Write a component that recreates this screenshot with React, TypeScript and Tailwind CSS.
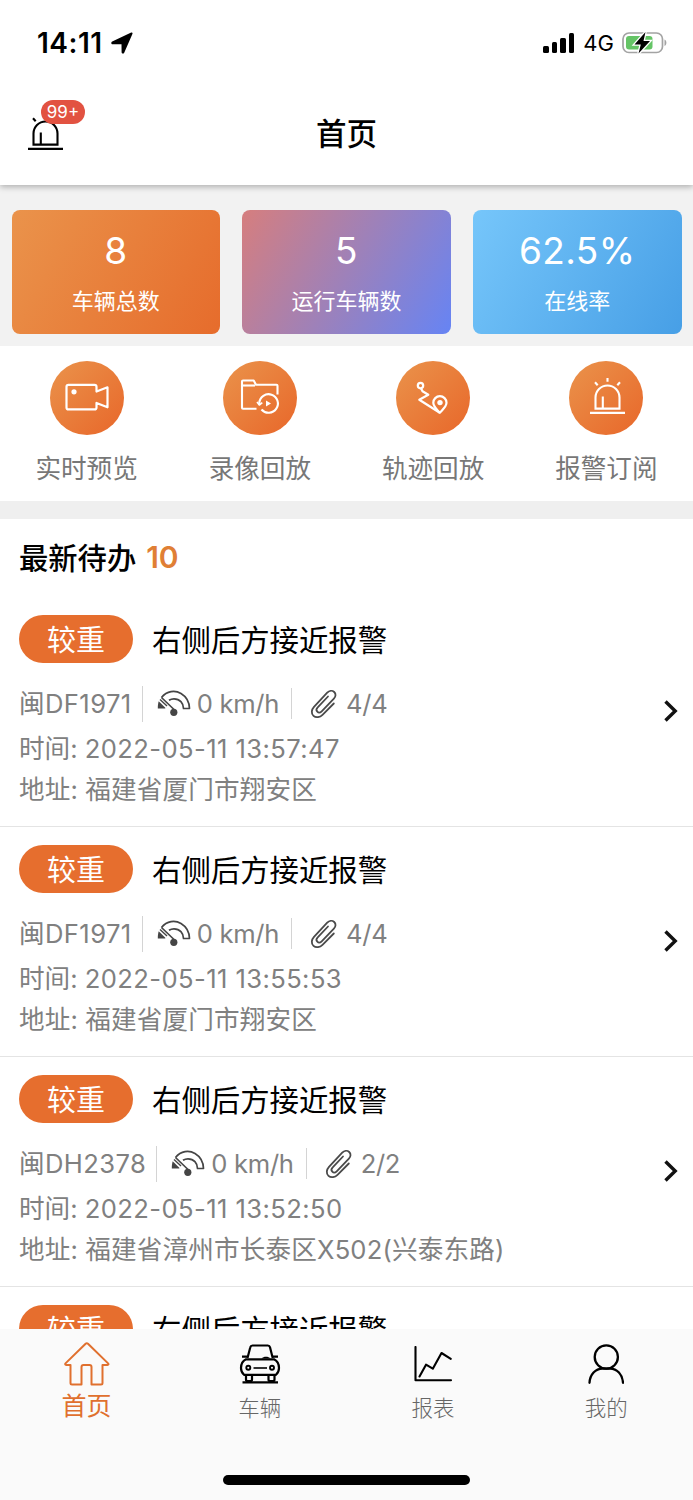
import { useState } from 'react';
import type { ReactNode } from 'react';

type TabType = 'home' | 'vehicles' | 'reports' | 'mine';

interface Alarm {
    id: number;
    level: string;
    title: string;
    plate: string;
    speed: string;
    files: string;
    time: string;
    address: string;
}

const alarms: Alarm[] = [
    { id: 1, level: '较重', title: '右侧后方接近报警', plate: '闽DF1971', speed: '0 km/h', files: '4/4', time: '2022-05-11 13:57:47', address: '福建省厦门市翔安区' },
    { id: 2, level: '较重', title: '右侧后方接近报警', plate: '闽DF1971', speed: '0 km/h', files: '4/4', time: '2022-05-11 13:55:53', address: '福建省厦门市翔安区' },
    { id: 3, level: '较重', title: '右侧后方接近报警', plate: '闽DH2378', speed: '0 km/h', files: '2/2', time: '2022-05-11 13:52:50', address: '福建省漳州市长泰区X502(兴泰东路)' },
    { id: 4, level: '较重', title: '右侧后方接近报警', plate: '闽DH2378', speed: '0 km/h', files: '2/2', time: '2022-05-11 13:50:12', address: '福建省漳州市长泰区X502(兴泰东路)' },
];

const stats = [
    { value: '8', label: '车辆总数', bg: 'bg-linear-[120deg,#ea934b,#e66c2c]' },
    { value: '5', label: '运行车辆数', bg: 'bg-linear-[120deg,#d67e7e,#6684f4]' },
    { value: '62.5%', label: '在线率', bg: 'bg-linear-[120deg,#76c6fa,#479fe6]' },
];

function SirenIcon({ className }: { className?: string }) {
    return (
        <svg className={className} viewBox="0 0 35 37" fill="none" stroke="currentColor" strokeWidth="2.1">
            <path d="M5.500 30.600V19.500a12 12 0 0 1 24 0v11.100z" />
            <path d="M12.800 18.500v12" />
            <path d="M0 34.800h35" strokeWidth="2.300" />
            <path d="M5 4.200l2.700 3M17.500 0v3.800M30 4.200l-2.700 3" />
        </svg>
    );
}

function CameraIcon() {
    return (
        <svg className="w-[74px] h-[74px]" viewBox="0 0 74 74" fill="none" stroke="white" strokeWidth="2.200" strokeLinejoin="round">
            <path d="M18.500 23.800h26a2 2 0 0 1 2 2v4.800l11-4.300v20l-11-4.300v4.400a2 2 0 0 1-2 2h-26a2 2 0 0 1-2-2V25.800a2 2 0 0 1 2-2z" />
            <circle cx="24" cy="30.800" r="2.600" fill="white" stroke="none" />
        </svg>
    );
}

function FolderIcon() {
    return (
        <svg className="w-[74px] h-[74px]" viewBox="0 0 74 74" fill="none" stroke="white" strokeWidth="2.100" strokeLinejoin="round">
            <path d="M33.500 47.700H20a1 1 0 0 1-1-1V20.500a1 1 0 0 1 1-1h10.700l2.300 4.300h20.500a1 1 0 0 1 1 1V33.500" />
            <path d="M19 24.500h13" />
            <path d="M36.300 44v-2a9.300 9.300 0 1 1 2.200 6.500" />
            <path d="M34 41l2.300 3 3-2.300" strokeWidth="1.600" />
            <path d="M43 39.500v6l5-3z" fill="white" stroke="none" />
        </svg>
    );
}

function TrackIcon() {
    return (
        <svg className="w-[74px] h-[74px]" viewBox="0 0 74 74" fill="none" stroke="white" strokeWidth="2.200" strokeLinejoin="round">
            <circle cx="24.500" cy="24.600" r="2.700" />
            <path d="M25 27.300l1.500 3 5.800 3.500-9 5 20.500 13" />
            <path d="M43.800 51.800c-3-3.500-6.500-6.300-6.500-10a6.600 6.600 0 0 1 13.200 0c0 3.700-3.500 6.500-6.700 10z" />
            <circle cx="44" cy="41.600" r="2.700" fill="white" stroke="none" />
        </svg>
    );
}

function SpeedIcon() {
    return (
        <svg className="w-[34px] h-[28px] text-[#454545]" viewBox="0 0 34 28" fill="none" stroke="currentColor" strokeWidth="1.700" strokeLinejoin="round">
            <path d="M4.500 7.500C10 .8 18 0 24 3.500c5 3 8.300 8 8.500 15h-6c0-5.500-3.700-9.700-9.500-9.700-1.800 0-3.500.5-5 1.500" />
            <path d="M4.500 7.500l12.500 12" />
            <path d="M3 9.500l7 6.500" strokeWidth="1.400" />
            <path d="M1.700 11.200l6.600 6.500v.8H.800c0-2.700.2-5 .9-7.300z" fill="currentColor" stroke="none" />
            <circle cx="16.800" cy="22.300" r="3.600" fill="currentColor" stroke="none" />
        </svg>
    );
}

function ClipIcon() {
    return (
        <svg className="w-[28px] h-[30px] text-[#4a4a4a]" viewBox="0 0 28 30" fill="none" stroke="currentColor" strokeWidth="1.800" strokeLinecap="round">
            <path d="M24.800 14.500L13.500 25.800c-2.500 2.500-6.500 3.300-9 1-2.600-2.400-2-6.300.5-9L18.200 3.700c2-2 5-2.500 7-.7s1.600 4.700-.3 6.700L12.700 22.300c-1.300 1.300-3.200 1.600-4.400.4s-.9-3 .4-4.300L19 7.500" />
        </svg>
    );
}

function HomeIcon() {
    return (
        <svg className="w-[46px] h-[44px]" viewBox="0 0 46 44" fill="none" stroke="currentColor" strokeWidth="2" strokeLinejoin="round">
            <path d="M21.600 1.700L1.500 21.400c-.6.700-.3 1.500.6 1.500H6.500V41c0 1 .6 1.500 1.500 1.500h9.500V25c0-1.300.8-2 2-2h6c1.200 0 2 .7 2 2v17.500H37c1 0 1.500-.6 1.500-1.500V22.900h5c1 0 1.300-.8.600-1.500L24 1.700c-.8-.7-1.600-.7-2.400 0z" />
        </svg>
    );
}

function CarIcon() {
    return (
        <svg className="w-[42px] h-[40px]" viewBox="0 0 42 40" fill="none" stroke="currentColor" strokeWidth="2.200" strokeLinejoin="round">
            <path d="M8.500 14L11.300 3.300c.3-1.300 1-1.800 2.200-1.800h15.300c1.200 0 1.900.5 2.200 1.800L33.700 14" />
            <path d="M3 12.600h5M34 12.600h5" strokeWidth="2.400" />
            <path d="M22.500 14.500c2-2.500 7-2.500 9 0z" fill="currentColor" stroke="none" />
            <path d="M7 15.300h28c3 1.500 5 5 5 8.700 0 3-1 5-3 6.800H5C3 29 2 27 2 24c0-4 2-7.200 5-8.700z" />
            <circle cx="9.300" cy="23.700" r="2" strokeWidth="1.900" />
            <circle cx="33" cy="23.700" r="2" strokeWidth="1.900" />
            <path d="M14.500 24h13.500" strokeWidth="1.600" />
            <path d="M7 31v4.500c0 1 .7 1.500 1.500 1.500h3c1 0 1.500-.6 1.500-1.500V31M29.500 31v4.500c0 1 .6 1.500 1.500 1.500h3c.9 0 1.500-.6 1.500-1.500V31" />
            <path d="M3.500 38.300h35.500" />
        </svg>
    );
}

function ChartIcon() {
    return (
        <svg className="w-[38px] h-[36px]" viewBox="0 0 38 36" fill="none" stroke="currentColor" strokeWidth="2.100" strokeLinecap="round" strokeLinejoin="round">
            <path d="M1.500 1v33.200H37" />
            <path d="M5.500 30.500l6.500-11.800 6.800 4L27.500 7l9.300 5.800" />
        </svg>
    );
}

function UserIcon() {
    return (
        <svg className="w-[36px] h-[40px]" viewBox="0 0 36 40" fill="none" stroke="currentColor" strokeWidth="2.300" strokeLinecap="round">
            <circle cx="18.300" cy="13" r="11.600" />
            <path d="M1.500 38.800c.5-8.500 6-14.100 13-14.100h7.500c7 0 12.500 5.600 13 14.100" />
        </svg>
    );
}

const shortcuts: { label: string; icon: ReactNode }[] = [
    { label: '实时预览', icon: <CameraIcon /> },
    { label: '录像回放', icon: <FolderIcon /> },
    { label: '轨迹回放', icon: <TrackIcon /> },
    { label: '报警订阅', icon: <SirenIcon className="w-[35px] h-[37px] mb-[2px] ml-[2px]" /> },
];

const tabs: { id: TabType; label: string; icon: ReactNode }[] = [
    { id: 'home', label: '首页', icon: <HomeIcon /> },
    { id: 'vehicles', label: '车辆', icon: <CarIcon /> },
    { id: 'reports', label: '报表', icon: <ChartIcon /> },
    { id: 'mine', label: '我的', icon: <UserIcon /> },
];

function StatusBar() {
    return (
        <div className="h-[86px] flex items-center justify-between pl-[37px] pr-[25px]">
            <div className="flex items-center gap-[8px]">
                <span className="text-[28px] leading-none font-semibold tracking-[0.5px]">14:11</span>
                <svg className="w-[22px] h-[22px]" viewBox="0 0 22 22" fill="currentColor">
                    <path d="M20.200.6c1-.4 1.700.3 1.200 1.300L13.200 20.700c-.6 1.300-2.600 1-2.600-.4l-.1-8-8.900-.1c-1.500 0-1.800-2-.4-2.600z" />
                </svg>
            </div>
            <div className="flex items-center">
                <div className="flex items-end gap-[3px] h-[20px]">
                    <span className="w-[5.500px] h-[7px] rounded-[1.500px] bg-black" />
                    <span className="w-[5.500px] h-[11px] rounded-[1.500px] bg-black" />
                    <span className="w-[5.500px] h-[15px] rounded-[1.500px] bg-black" />
                    <span className="w-[5.500px] h-[20px] rounded-[1.500px] bg-black" />
                </div>
                <span className="ml-[9px] text-[22px] leading-none">4G</span>
                <svg className="ml-[8px] w-[46px] h-[24px]" viewBox="0 0 46 24">
                    <rect x="1" y="2" width="39.500" height="19.500" rx="6" fill="none" stroke="#a3a3a3" strokeWidth="1.700" />
                    <rect x="4" y="5" width="26.500" height="13.500" rx="3" fill="#65c466" />
                    <path d="M42.500 8.500c2.500 1 2.500 5.500 0 6.500z" fill="#a3a3a3" />
                    <path d="M23.500 1L12.500 13.500h6.300L16.500 22.500 28 10h-6.500z" fill="black" stroke="white" strokeWidth="2.600" paintOrder="stroke" />
                </svg>
            </div>
        </div>
    );
}

function AlarmItem({ alarm }: { alarm: Alarm }) {
    return (
        <div className="h-[230px] shrink-0 border-b-[1.500px] border-[#e4e4e4] flex items-center justify-between pl-[19px] pr-[14px]">
            <div className="h-full pt-[18px]">
                <div className="h-[48px] flex items-center gap-[19px]">
                    <span className="w-[114px] h-[48px] rounded-full bg-[#e66e2e] text-white text-[29px] leading-[51px] text-center">{alarm.level}</span>
                    <span className="h-[48px] text-[29.400px] leading-[51px] text-black">{alarm.title}</span>
                </div>
                <div className="mt-[22px] h-[37px] flex items-center text-[25.600px] leading-[37px] text-[#808080]">
                    <span className="tracking-[0.4px]">{alarm.plate}</span>
                    <span className="ml-[10px] w-px h-[36px] bg-[#d4d4d4]" />
                    <span className="ml-[14px]"><SpeedIcon /></span>
                    <span className="ml-[6px] tracking-[-0.300px]">{alarm.speed}</span>
                    <span className="ml-[12px] w-px h-[31px] bg-[#d4d4d4]" />
                    <span className="ml-[17px]"><ClipIcon /></span>
                    <span className="ml-[9px] tracking-[-0.300px]">{alarm.files}</span>
                </div>
                <div className="mt-[6px] text-[25.600px] leading-[41px] text-[#808080]">
                    <p>时间: <span className="tracking-[0.400px]">{alarm.time}</span></p>
                    <p className="tracking-[0.150px]">地址: {alarm.address}</p>
                </div>
            </div>
            <svg className="mb-[2px] w-[16px] h-[22px]" viewBox="0 0 16 22" fill="none" stroke="#111" strokeWidth="3.400">
                <path d="M2.500 1.500l9.700 9.500-9.700 9.500" />
            </svg>
        </div>
    );
}

export default function App() {
    const [activeTab, setActiveTab] = useState<TabType>('home');

    return (
        <div className="w-full h-[1500px] flex flex-col overflow-hidden bg-white text-black font-['Inter','Noto_Sans_CJK_SC',sans-serif]">
            {/* Header */}
            <header className="h-[185px] shrink-0 relative z-10 bg-white shadow-[0_2px_6px_rgba(0,0,0,0.28)]">
                <StatusBar />
                <div className="relative h-[96px] flex items-center justify-center">
                    <div className="absolute left-[28px] top-[28px]">
                        <SirenIcon className="w-[35px] h-[37px]" />
                        <span className="absolute left-[13px] -top-[14px] w-[44px] h-[24px] rounded-full bg-[#e25241] text-white text-[17px] leading-[25px] text-center">99+</span>
                    </div>
                    <h1 className="text-[30.500px] leading-none font-medium">首页</h1>
                </div>
            </header>

            {/* Stats */}
            <section className="h-[161px] shrink-0 bg-[#f2f2f2] grid grid-cols-3 gap-[22px] px-[11.500px] pt-[25px] pb-[12px]">
                {stats.map((stat) => (
                    <div key={stat.label} className={`rounded-lg flex flex-col items-center text-white ${stat.bg}`}>
                        <span className="mt-[21px] text-[37px] leading-[40px] tracking-[0.400px]">{stat.value}</span>
                        <span className="mt-[15px] text-[22px] leading-[30px]">{stat.label}</span>
                    </div>
                ))}
            </section>

            {/* Shortcuts */}
            <section className="h-[155px] shrink-0 grid grid-cols-4">
                {shortcuts.map((item) => (
                    <button key={item.label} className="flex flex-col items-center pt-[14.500px]">
                        <span className="w-[74px] h-[74px] rounded-full bg-linear-[135deg,#ea934b,#e8672a] text-white flex items-center justify-center">{item.icon}</span>
                        <span className="mt-[15px] text-[25.600px] leading-[38px] text-[#777]">{item.label}</span>
                    </button>
                ))}
            </section>
            <div className="h-[18px] shrink-0 bg-[#efefef]" />

            {/* Pending alarms */}
            <main className="h-[810px] shrink-0 flex flex-col overflow-hidden">
                <h2 className="h-[78px] shrink-0 pl-[19px] pt-[2px] flex items-center gap-[10px] text-[29.300px] font-medium">
                    最新待办 <span className="pb-[3px] text-[30px] font-semibold text-[#e07f35]">10</span>
                </h2>
                {alarms.map((alarm) => (
                    <AlarmItem key={alarm.id} alarm={alarm} />
                ))}
            </main>

            {/* Tab bar */}
            <nav className="grow bg-[#fafafa] flex flex-col items-center justify-between pb-[15px]">
                <div className="w-full grid grid-cols-4">
                    {tabs.map((tab) => (
                        <button
                            key={tab.id}
                            onClick={() => setActiveTab(tab.id)}
                            className={`flex flex-col items-center pt-[13px] ${activeTab === tab.id ? 'text-[#e0702e]' : 'text-black'}`}
                        >
                            <span className="h-[44px] flex items-center">{tab.icon}</span>
                            <span
                                className={
                                    activeTab === tab.id
                                        ? 'mt-[2px] text-[25px] leading-[36px]'
                                        : 'mt-[6px] text-[21.500px] leading-[32px] font-light text-[#666]'
                                }
                            >
                                {tab.label}
                            </span>
                        </button>
                    ))}
                </div>
                <div className="w-[247px] h-[10px] rounded-full bg-black" />
            </nav>
        </div>
    );
}
